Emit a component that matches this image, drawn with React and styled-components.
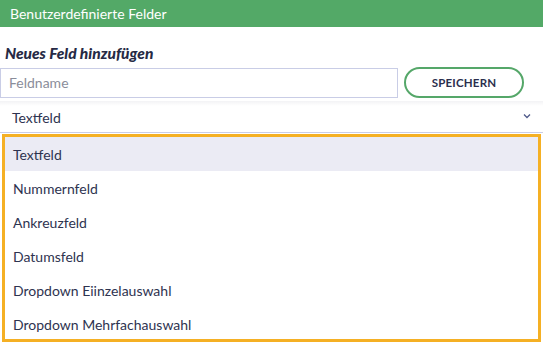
import React from "react";
import styled, { createGlobalStyle } from "styled-components";

const GlobalStyle = createGlobalStyle`
  html, body {
    margin: 0;
    padding: 0;
    background: #fff;
  }
  body {
    font-family: "Lato", "Open Sans", sans-serif;
    color: #2e3350;
  }
`;

const Panel = styled.div`
  width: 543px;
  height: 346px;
  overflow: hidden;
  background: #fff;
`;

const Header = styled.div`
  height: 27px;
  background: #53a967;
  color: #fff;
  font-size: 14px;
  line-height: 27px;
  padding-left: 10px;
`;

const Label = styled.div`
  font-weight: 900;
  font-style: italic;
  font-size: 15.5px;
  padding: 16px 0 0 5px;
  height: 24px;
  line-height: 20px;
  color: #262a45;
`;

const AddRow = styled.div`
  display: flex;
  align-items: center;
  gap: 6px;
  height: 31px;
`;

const NameInput = styled.input`
  box-sizing: border-box;
  width: 398px;
  height: 30px;
  border: 1px solid #c9cde6;
  padding: 0 8px;
  font-family: inherit;
  font-size: 14px;
  color: #2e3350;
  outline: none;
  &::placeholder {
    color: #8a8d9a;
  }
`;

const SaveButton = styled.button`
  box-sizing: border-box;
  width: 120px;
  height: 31px;
  border: 2px solid #55a769;
  border-radius: 16px;
  background: #fff;
  font-family: inherit;
  font-weight: 700;
  font-size: 11.5px;
  color: #2b2f4e;
  letter-spacing: 0.2px;
`;

const SelectBox = styled.div`
  margin-top: 3px;
  height: 32px;
  box-sizing: border-box;
  display: flex;
  align-items: center;
  justify-content: space-between;
  padding: 2px 12px 0 12px;
  border-bottom: 1px solid #c9cde6;
  background: linear-gradient(#f3f3f5, #fff 5px);
  font-size: 14px;
`;

const Chevron = styled.svg`
  width: 8px;
  height: 6px;
  margin-top: -3px;
`;

const Menu = styled.ul`
  list-style: none;
  margin: 1px 2px 0 2px;
  padding: 0;
  height: 208px;
  box-sizing: border-box;
  border: 3px solid #f5b024;
  overflow: hidden;
`;

const Option = styled.li`
  height: 34px;
  display: flex;
  align-items: center;
  padding-left: 8px;
  font-size: 14px;
  background: ${(p) => (p.$active ? "#ebebf4" : "transparent")};
`;

const options = [
  "Textfeld",
  "Nummernfeld",
  "Ankreuzfeld",
  "Datumsfeld",
  "Dropdown Eiinzelauswahl",
  "Dropdown Mehrfachauswahl",
];

export default function App() {
  return (
    <Panel>
      <GlobalStyle />
      <Header>Benutzerdefinierte Felder</Header>
      <Label>Neues Feld hinzufügen</Label>
      <AddRow>
        <NameInput placeholder="Feldname" />
        <SaveButton>SPEICHERN</SaveButton>
      </AddRow>
      <SelectBox>
        <span>Textfeld</span>
        <Chevron viewBox="0 0 8 6">
          <path d="M1 1.5l3 3 3-3" fill="none" stroke="#4f5a8a" strokeWidth="1.3" />
        </Chevron>
      </SelectBox>
      <Menu>
        {options.map((o, i) => (
          <Option key={o} $active={i === 0}>
            {o}
          </Option>
        ))}
      </Menu>
    </Panel>
  );
}
